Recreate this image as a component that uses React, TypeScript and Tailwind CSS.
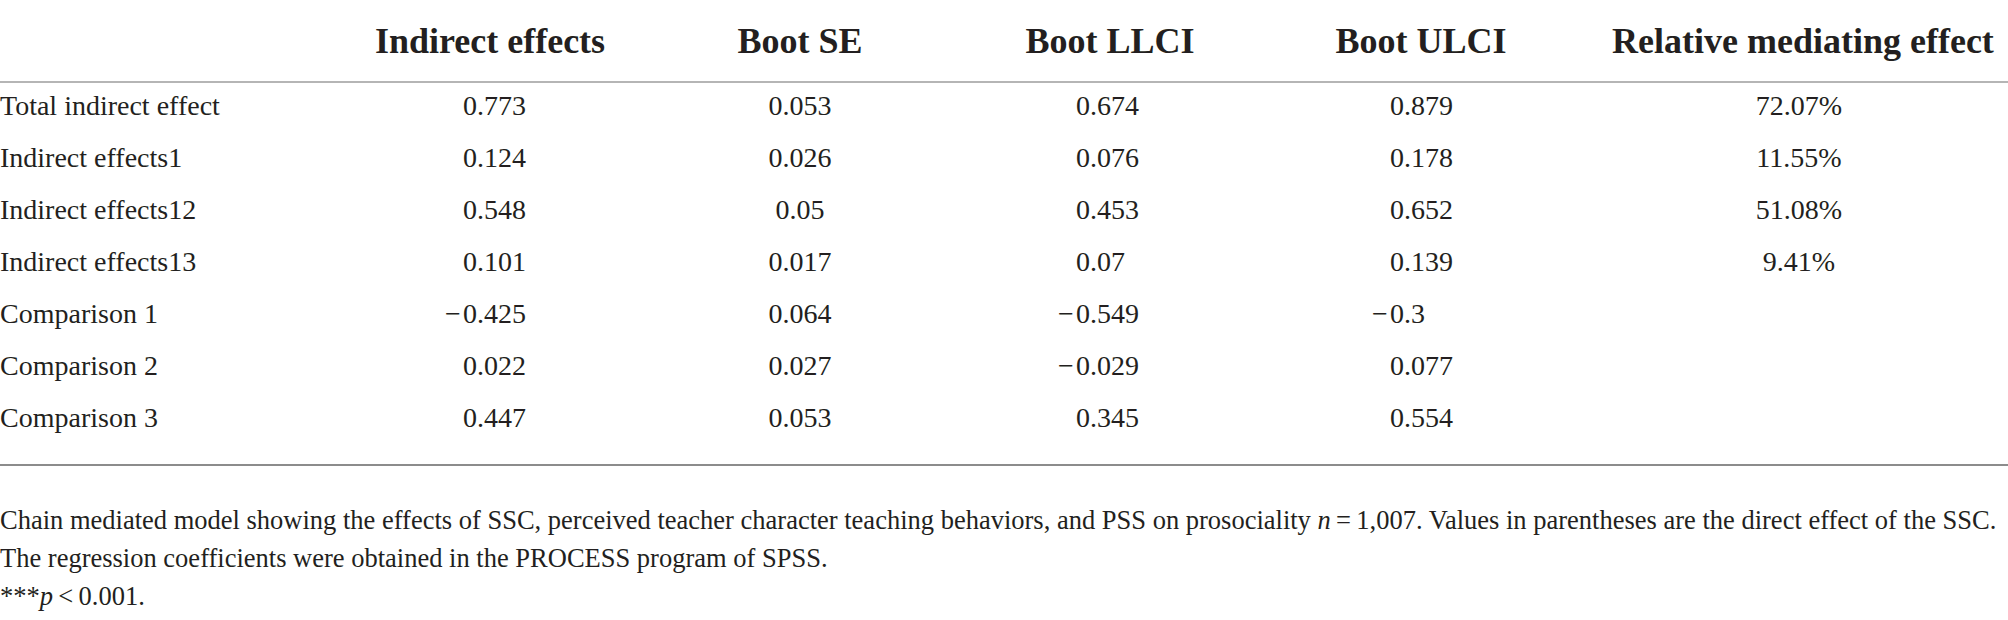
const cols = "grid grid-cols-[370px_240px_380px_240px_382px_374px]";

type Row = {
  label: string;
  ie: string;
  se: string;
  llci: string;
  ulci: string;
  rel?: string;
};

const rows: Row[] = [
  { label: "Total indirect effect", ie: "0.773", se: "0.053", llci: "0.674", ulci: "0.879", rel: "72.07%" },
  { label: "Indirect effects1", ie: "0.124", se: "0.026", llci: "0.076", ulci: "0.178", rel: "11.55%" },
  { label: "Indirect effects12", ie: "0.548", se: "0.05", llci: "0.453", ulci: "0.652", rel: "51.08%" },
  { label: "Indirect effects13", ie: "0.101", se: "0.017", llci: "0.07", ulci: "0.139", rel: "9.41%" },
  { label: "Comparison 1", ie: "−0.425", se: "0.064", llci: "−0.549", ulci: "−0.3" },
  { label: "Comparison 2", ie: "0.022", se: "0.027", llci: "−0.029", ulci: "0.077" },
  { label: "Comparison 3", ie: "0.447", se: "0.053", llci: "0.345", ulci: "0.554" },
];

// decimal-aligned number: the minus sign hangs to the left of "0."
function Num({ value }: { value: string }) {
  if (value.startsWith("−")) {
    return (
      <span>
        <span className="-ml-[18px] inline-block w-[18px]">−</span>
        {value.slice(1)}
      </span>
    );
  }
  return <span>{value}</span>;
}

export default function App() {
  return (
    <div className="w-[2008px] h-[620px] bg-white text-[#231f20] font-['Liberation_Serif',serif] overflow-hidden">
      <div className={`${cols} h-[83px] pt-[23px] border-b-2 border-[#b5b5b5] text-[36px] leading-[36px] font-bold`}>
        <div />
        <div className="text-center">Indirect effects</div>
        <div className="text-center">Boot SE</div>
        <div className="text-center">Boot LLCI</div>
        <div className="text-center">Boot ULCI</div>
        <div className="text-center whitespace-nowrap">Relative mediating effect</div>
      </div>

      <div className="pt-[3px] pb-[14px] border-b-2 border-[#8c8c8c] text-[28px] leading-[40px]">
        {rows.map((r) => (
          <div key={r.label} className={`${cols} h-[52px]`}>
            <div className="whitespace-nowrap">{r.label}</div>
            <div className="pl-[93px]">
              <Num value={r.ie} />
            </div>
            <div className="text-center">{r.se}</div>
            <div className="pl-[86px]">
              <Num value={r.llci} />
            </div>
            <div className="pl-[160px]">
              <Num value={r.ulci} />
            </div>
            <div className="text-center">{r.rel}</div>
          </div>
        ))}
      </div>

      <div className="mt-[35px] text-[26.5px] leading-[38px] whitespace-nowrap">
        <p>
          Chain mediated model showing the effects of SSC, perceived teacher character teaching behaviors, and PSS on
          prosociality <i>n</i>{"\u2009=\u2009"}1,007. Values in parentheses are the direct effect of the SSC.
        </p>
        <p>The regression coefficients were obtained in the PROCESS program of SPSS.</p>
        <p>
          ***<i>p</i>
          {"\u2009<\u2009"}0.001.
        </p>
      </div>
    </div>
  );
}
